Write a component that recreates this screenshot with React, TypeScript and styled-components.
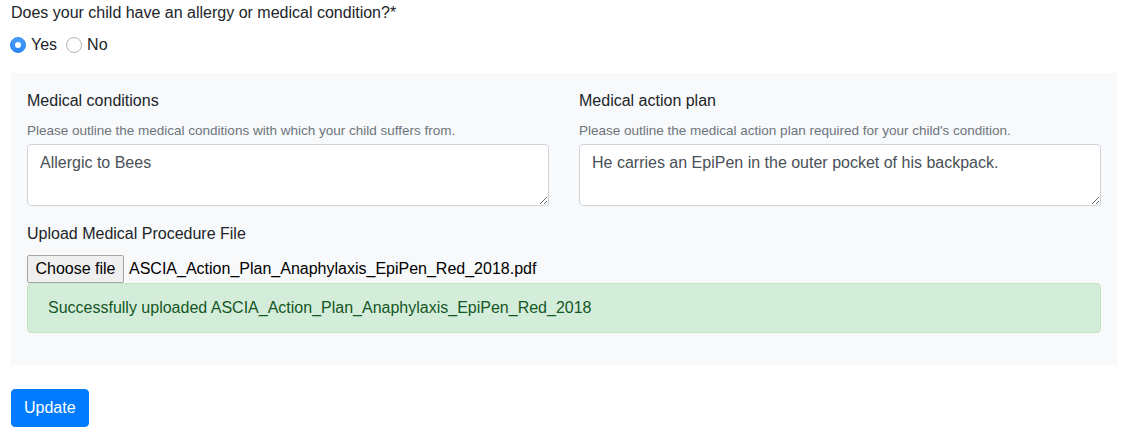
import React from "react";
import styled, { createGlobalStyle } from "styled-components";

const Global = createGlobalStyle`
  html, body { margin: 0; padding: 0; background: #fff; }
  body {
    font-family: "Liberation Sans", Arial, sans-serif;
    font-size: 16px;
    line-height: 1.5;
    color: #212529;
  }
  * { box-sizing: border-box; }
`;

const Page = styled.div`
  padding: 1px 10px 0 11px;
`;

const Question = styled.div`
  line-height: 24px;
  margin-bottom: 8px;
`;

const RadioRow = styled.div`
  display: flex;
  align-items: center;
  height: 24px;
  margin-bottom: 16px;
`;

const RadioOption = styled.label`
  display: inline-flex;
  align-items: center;
  margin-right: 10px;
  margin-left: -1px;
`;

const RadioDot = styled.span<{ $checked?: boolean }>`
  width: 16px;
  height: 16px;
  border-radius: 50%;
  margin-right: 5px;
  display: inline-flex;
  align-items: center;
  justify-content: center;
  background: ${(p) => (p.$checked ? "linear-gradient(#4ba0ff, #2a86f5)" : "#fff")};
  border: 1px solid ${(p) => (p.$checked ? "#2b82ec" : "#b3b3b3")};
  &::after {
    content: "";
    display: ${(p) => (p.$checked ? "block" : "none")};
    width: 6px;
    height: 6px;
    border-radius: 50%;
    background: #fff;
  }
`;

const Panel = styled.div`
  background: #f8f9fa;
  padding: 16px;
  margin-bottom: 24px;
`;

const Columns = styled.div`
  display: grid;
  grid-template-columns: 1fr 1fr;
  column-gap: 30px;
`;

const FormGroup = styled.div`
  margin-bottom: 16px;
`;

const Label = styled.label`
  display: block;
  line-height: 24px;
  margin-bottom: 8px;
`;

const Help = styled.small`
  display: block;
  font-size: 13.5px;
  line-height: 19.2px;
  color: #6c757d;
  margin-bottom: 4px;
`;

const TextArea = styled.textarea`
  display: block;
  width: 100%;
  height: 62px;
  padding: 6px 12px;
  font-family: inherit;
  font-size: 16px;
  line-height: 24px;
  color: #495057;
  background: #fff;
  border: 1px solid #ced4da;
  border-radius: 4px;
  resize: vertical;
  outline: none;
`;

const FileRow = styled.div`
  display: flex;
  align-items: center;
  height: 29px;
`;

const FileButton = styled.button`
  font-family: inherit;
  font-size: 16px;
  color: #000;
  height: 28px;
  width: 97px;
  padding: 0 7px;
  background: #efefef;
  border: 1px solid #a6a6a6;
  border-radius: 2px;
  margin-right: 5px;
`;

const FileName = styled.span`
  font-size: 16px;
  color: #000;
`;

const Alert = styled.div`
  padding: 12px 20px;
  line-height: 24px;
  color: #155724;
  background: #d4edda;
  border: 1px solid #c3e6cb;
  border-radius: 4px;
  margin-bottom: 16px;
`;

const SubmitButton = styled.button`
  font-family: inherit;
  font-size: 16px;
  line-height: 24px;
  padding: 6px 12px;
  color: #fff;
  background: #007bff;
  border: 1px solid #007bff;
  border-radius: 4px;
`;

export default function App() {
  return (
    <Page>
      <Global />
      <Question>Does your child have an allergy or medical condition?*</Question>
      <RadioRow>
        <RadioOption>
          <RadioDot $checked />
          Yes
        </RadioOption>
        <RadioOption>
          <RadioDot />
          No
        </RadioOption>
      </RadioRow>
      <Panel>
        <Columns>
          <FormGroup>
            <Label>Medical conditions</Label>
            <Help>Please outline the medical conditions with which your child suffers from.</Help>
            <TextArea rows={2} defaultValue="Allergic to Bees" />
          </FormGroup>
          <FormGroup>
            <Label>Medical action plan</Label>
            <Help>Please outline the medical action plan required for your child's condition.</Help>
            <TextArea rows={2} defaultValue="He carries an EpiPen in the outer pocket of his backpack." />
          </FormGroup>
        </Columns>
        <Label>Upload Medical Procedure File</Label>
        <FileRow>
          <FileButton type="button">Choose file</FileButton>
          <FileName>ASCIA_Action_Plan_Anaphylaxis_EpiPen_Red_2018.pdf</FileName>
        </FileRow>
        <Alert>Successfully uploaded ASCIA_Action_Plan_Anaphylaxis_EpiPen_Red_2018</Alert>
      </Panel>
      <SubmitButton type="button">Update</SubmitButton>
    </Page>
  );
}
